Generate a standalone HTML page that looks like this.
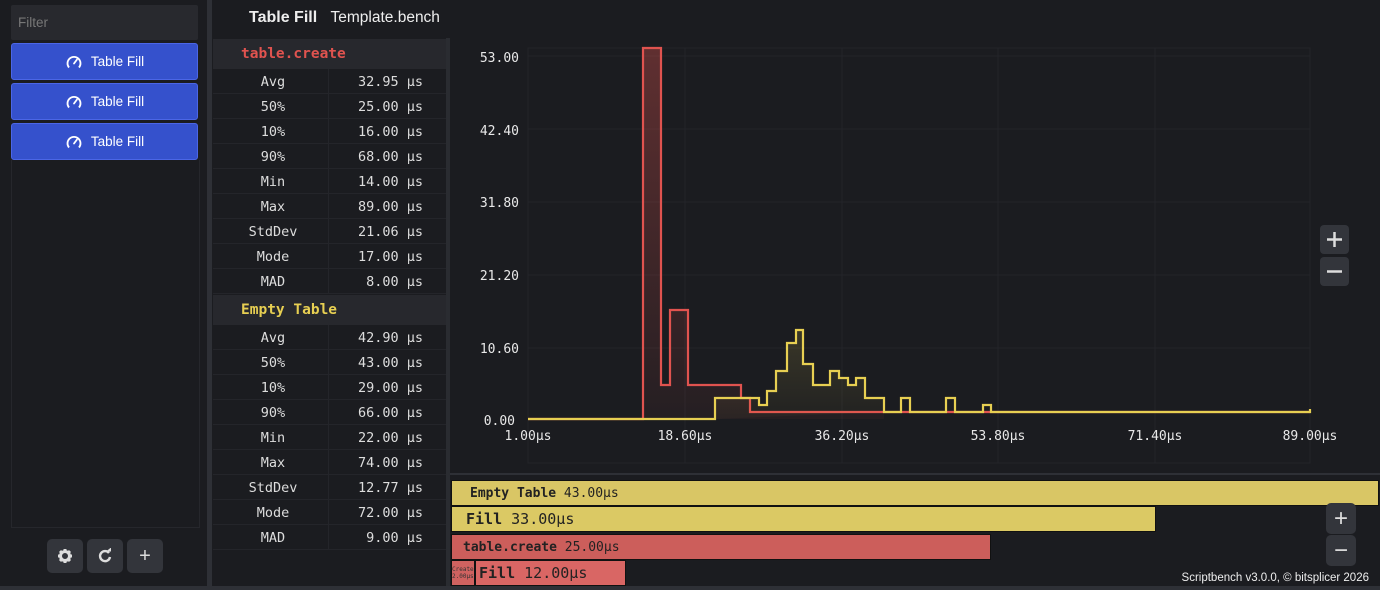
<!DOCTYPE html>
<html><head><meta charset="utf-8"><style>
*{margin:0;padding:0;box-sizing:border-box}
body{width:1380px;height:590px;background:#1b1c20;position:relative;overflow:hidden;font-family:"Liberation Sans",sans-serif;color:#ddd}
.abs{position:absolute}
.mono{font-family:"DejaVu Sans Mono","Liberation Mono",monospace}
.btn{position:absolute;left:11px;width:187px;height:37px;background:#3551cc;border:1px solid #4b66e6;border-radius:3px;color:#fff;font-size:13.5px;display:flex;align-items:center;justify-content:center;gap:8px}
.row{position:absolute;left:213px;width:233px;height:25px;border-bottom:1px solid #24252a;font-size:13.5px;color:#ddd}
.row span{position:absolute;top:5px}
.row .k{left:0;width:120px;text-align:center}
.row .v{right:23px;text-align:right}
.row:after{content:"";position:absolute;left:115px;top:0;bottom:0;width:1px;background:#24252a}
.hdr{position:absolute;left:213px;width:233px;height:30px;background:#27282d;font-size:14.5px;padding:7px 0 0 28px;font-weight:bold}
.sq{position:absolute;width:36px;height:34px;background:#33353b;border-radius:5px;color:#ddd;display:flex;align-items:center;justify-content:center}
.bar{position:absolute;height:26px;border:1px solid #111;font-family:"DejaVu Sans Mono",monospace;color:#222;display:flex;align-items:center}
</style></head><body>
<div class="abs" style="left:11px;top:5px;width:187px;height:35px;background:#28292e;border-radius:2px;color:#777;font-size:13.5px;padding:10px 7px">Filter</div>
<div class="abs" style="left:11px;top:160px;width:189px;height:368px;border:1px solid #26272c;border-top:none"></div>
<div class="btn" style="top:43px"><svg width="18" height="18" viewBox="0 0 18 18"><path d="M4 14.5A6.5 6.5 0 1 1 14 14.5" fill="none" stroke="#fff" stroke-width="1.8"/><path d="M9 10.5L12 6.5" stroke="#fff" stroke-width="1.8" stroke-linecap="round"/></svg>Table Fill</div>
<div class="btn" style="top:83px"><svg width="18" height="18" viewBox="0 0 18 18"><path d="M4 14.5A6.5 6.5 0 1 1 14 14.5" fill="none" stroke="#fff" stroke-width="1.8"/><path d="M9 10.5L12 6.5" stroke="#fff" stroke-width="1.8" stroke-linecap="round"/></svg>Table Fill</div>
<div class="btn" style="top:123px"><svg width="18" height="18" viewBox="0 0 18 18"><path d="M4 14.5A6.5 6.5 0 1 1 14 14.5" fill="none" stroke="#fff" stroke-width="1.8"/><path d="M9 10.5L12 6.5" stroke="#fff" stroke-width="1.8" stroke-linecap="round"/></svg>Table Fill</div>
<div class="sq" style="left:47px;top:539px"><svg width="16" height="16" viewBox="0 0 16 16"><circle cx="8" cy="8" r="4.5" fill="none" stroke="#ddd" stroke-width="3"/><g stroke="#ddd" stroke-width="3"><path d="M8 1v3M8 12v3M1 8h3M12 8h3M3 3l2 2M11 11l2 2M13 3l-2 2M3 13l2-2"/></g></svg></div>
<div class="sq" style="left:87px;top:539px"><svg width="16" height="16" viewBox="0 0 16 16"><path d="M12 5A5 5 0 1 0 13 9" fill="none" stroke="#ddd" stroke-width="2.4"/><path d="M9 3.5h5v-4z" fill="#ddd"/></svg></div>
<div class="sq" style="left:127px;top:539px;font-size:20px">+</div>
<div class="abs" style="left:207px;top:0;width:5px;height:590px;background:#2e3036"></div>
<div class="abs" style="left:0;top:586px;width:1380px;height:4px;background:#2e3036"></div>
<div class="abs" style="left:249px;top:9px;font-size:16px;color:#eee"><b>Table Fill</b>&nbsp;&nbsp; <span style="font-size:15.5px">Template.bench</span></div>
<div class="abs" style="left:446px;top:38px;width:4px;height:548px;background:#2a2c31"></div>
<div class="hdr mono" style="top:39px;color:#e0534f">table.create</div>
<div class="row mono" style="top:69px"><span class="k">Avg</span><span class="v">32.95 µs</span></div>
<div class="row mono" style="top:94px"><span class="k">50%</span><span class="v">25.00 µs</span></div>
<div class="row mono" style="top:119px"><span class="k">10%</span><span class="v">16.00 µs</span></div>
<div class="row mono" style="top:144px"><span class="k">90%</span><span class="v">68.00 µs</span></div>
<div class="row mono" style="top:169px"><span class="k">Min</span><span class="v">14.00 µs</span></div>
<div class="row mono" style="top:194px"><span class="k">Max</span><span class="v">89.00 µs</span></div>
<div class="row mono" style="top:219px"><span class="k">StdDev</span><span class="v">21.06 µs</span></div>
<div class="row mono" style="top:244px"><span class="k">Mode</span><span class="v">17.00 µs</span></div>
<div class="row mono" style="top:269px"><span class="k">MAD</span><span class="v">8.00 µs</span></div>
<div class="hdr mono" style="top:295px;color:#e7cf52">Empty Table</div>
<div class="row mono" style="top:325px"><span class="k">Avg</span><span class="v">42.90 µs</span></div>
<div class="row mono" style="top:350px"><span class="k">50%</span><span class="v">43.00 µs</span></div>
<div class="row mono" style="top:375px"><span class="k">10%</span><span class="v">29.00 µs</span></div>
<div class="row mono" style="top:400px"><span class="k">90%</span><span class="v">66.00 µs</span></div>
<div class="row mono" style="top:425px"><span class="k">Min</span><span class="v">22.00 µs</span></div>
<div class="row mono" style="top:450px"><span class="k">Max</span><span class="v">74.00 µs</span></div>
<div class="row mono" style="top:475px"><span class="k">StdDev</span><span class="v">12.77 µs</span></div>
<div class="row mono" style="top:500px"><span class="k">Mode</span><span class="v">72.00 µs</span></div>
<div class="row mono" style="top:525px"><span class="k">MAD</span><span class="v">9.00 µs</span></div>
<svg class="abs" style="left:0;top:0" width="1380" height="475" viewBox="0 0 1380 475">
<defs><linearGradient id="rg" x1="0" y1="0" x2="0" y2="1"><stop offset="0" stop-color="#e0534f" stop-opacity=".35"/><stop offset="1" stop-color="#e0534f" stop-opacity=".05"/></linearGradient><linearGradient id="yg" x1="0" y1="0" x2="0" y2="1"><stop offset="0" stop-color="#e7cf52" stop-opacity=".15"/><stop offset="1" stop-color="#e7cf52" stop-opacity=".03"/></linearGradient></defs>
<g stroke="#232429" stroke-width="1" fill="none">
<path d="M528 48H1310V463H528Z"/>
<path d="M528 56H1310M528 129H1310M528 202H1310M528 275H1310M528 348H1310M685 48V463M842 48V463M998 48V463M1155 48V463"/>
</g>
<path d="M643 419V48H661V385H670V310H688V385H741V398H750V412H884V419H643Z" fill="url(#rg)"/>
<path d="M528 419H643V48H661V385H670V310H688V385H741V398H750V412H1310" fill="none" stroke="#e0534f" stroke-width="2.2"/>
<path d="M715 419V398H759V405H767V391H776V371H787V343H796V330H803V364H813V385H830V371H839V378H848V385H856V378H865V398H884V412Z" fill="url(#yg)"/>
<path d="M528 419H715V398H759V405H767V391H776V371H787V343H796V330H803V364H813V385H830V371H839V378H848V385H856V378H865V398H884V412H901V398H910V412H946V398H955V412H983V405H991V412H1310V409" fill="none" stroke="#e7cf52" stroke-width="2.2"/>
<g font-family="DejaVu Sans Mono,monospace" font-size="13" fill="#e8e8e8" text-anchor="end">
<text x="519" y="62">53.00</text><text x="519" y="135">42.40</text><text x="519" y="207">31.80</text><text x="519" y="280">21.20</text><text x="519" y="353">10.60</text><text x="515" y="425">0.00</text>
</g>
<g font-family="DejaVu Sans Mono,monospace" font-size="13" fill="#e8e8e8" text-anchor="middle">
<text x="528" y="440">1.00µs</text><text x="685" y="440">18.60µs</text><text x="842" y="440">36.20µs</text><text x="998" y="440">53.80µs</text><text x="1155" y="440">71.40µs</text><text x="1310" y="440">89.00µs</text>
</g>
<rect x="1320" y="225" width="29" height="29" rx="4" fill="#33353b"/><path d="M1334.5 232v15M1327 239.5h15" stroke="#ddd" stroke-width="2.5"/>
<rect x="1320" y="257" width="29" height="29" rx="4" fill="#33353b"/><path d="M1327 271.5h15" stroke="#ddd" stroke-width="2.5"/>
<rect x="450" y="473" width="930" height="4" fill="#2e3036"/>
</svg>
<div class="bar" style="left:451px;top:480px;width:928px;background:#d9c665;font-size:13px;padding-left:18px"><b>Empty Table</b>&nbsp;43.00µs</div>
<div class="bar" style="left:451px;top:506px;width:705px;background:#dbc964;font-size:15px;padding-left:14px"><b>Fill</b>&nbsp;33.00µs</div>
<div class="bar" style="left:451px;top:534px;width:540px;background:#cc5e5b;font-size:13px;padding-left:11px"><b>table.create</b>&nbsp;25.00µs</div>
<div class="bar" style="left:451px;top:560px;width:24px;background:#d06260;font-size:6px;line-height:7px;display:block;padding-top:5px;color:#333">Create<br>2.00µs</div>
<div class="bar" style="left:475px;top:560px;width:151px;background:#d96664;font-size:15px;padding-left:3px"><b>Fill</b>&nbsp;12.00µs</div>
<div class="sq" style="left:1326px;top:503px;width:30px;height:31px;font-size:24px">+</div>
<div class="sq" style="left:1326px;top:535px;width:30px;height:31px;font-size:24px">−</div>
<div class="abs" style="right:11px;top:572px;font-size:11.5px;color:#eee">Scriptbench v3.0.0, © bitsplicer 2026</div>
</body></html>
